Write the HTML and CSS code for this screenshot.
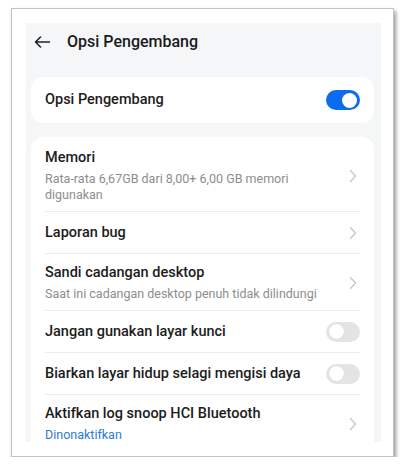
FILE: index.html
```html
<!DOCTYPE html>
<html lang="id">
<head>
<meta charset="utf-8">
<link rel="stylesheet" href="styles.css">
</head>
<body>
<div class="frame">
  <div class="screen">
    <div class="header">
      <svg class="back" width="16" height="12" viewBox="0 0 16 12"><path d="M15.5 6H1.5M6.5 1L1.5 6l5 5" fill="none" stroke="#222" stroke-width="1.6" stroke-linecap="round" stroke-linejoin="round"/></svg>
      <span class="title">Opsi Pengembang</span>
    </div>
    <div class="card card-main">
      <span class="row-title">Opsi Pengembang</span>
      <span class="toggle on"><span class="knob"></span></span>
    </div>
    <div class="card list">
      <div class="row two first">
        <div class="texts">
          <div class="row-title">Memori</div>
          <div class="sub">Rata-rata 6,67GB dari 8,00+ 6,00 GB memori digunakan</div>
        </div>
        <svg class="chev" width="8" height="14" viewBox="0 0 8 14"><path d="M1.5 1.5L6.5 7l-5 5.5" fill="none" stroke="#c4c4c4" stroke-width="1.2" stroke-linecap="round" stroke-linejoin="round"/></svg>
      </div>
      <div class="row">
        <div class="texts"><div class="row-title">Laporan bug</div></div>
        <svg class="chev" width="8" height="14" viewBox="0 0 8 14"><path d="M1.5 1.5L6.5 7l-5 5.5" fill="none" stroke="#c4c4c4" stroke-width="1.2" stroke-linecap="round" stroke-linejoin="round"/></svg>
      </div>
      <div class="row two">
        <div class="texts">
          <div class="row-title">Sandi cadangan desktop</div>
          <div class="sub">Saat ini cadangan desktop penuh tidak dilindungi</div>
        </div>
        <svg class="chev" width="8" height="14" viewBox="0 0 8 14"><path d="M1.5 1.5L6.5 7l-5 5.5" fill="none" stroke="#c4c4c4" stroke-width="1.2" stroke-linecap="round" stroke-linejoin="round"/></svg>
      </div>
      <div class="row">
        <div class="texts"><div class="row-title">Jangan gunakan layar kunci</div></div>
        <span class="toggle"><span class="knob"></span></span>
      </div>
      <div class="row">
        <div class="texts"><div class="row-title">Biarkan layar hidup selagi mengisi daya</div></div>
        <span class="toggle"><span class="knob"></span></span>
      </div>
      <div class="row two last">
        <div class="texts">
          <div class="row-title">Aktifkan log snoop HCI Bluetooth</div>
          <div class="sub blue">Dinonaktifkan</div>
        </div>
        <svg class="chev" width="8" height="14" viewBox="0 0 8 14"><path d="M1.5 1.5L6.5 7l-5 5.5" fill="none" stroke="#c4c4c4" stroke-width="1.2" stroke-linecap="round" stroke-linejoin="round"/></svg>
      </div>
    </div>
  </div>
</div>
</body>
</html>
```
FILE: styles.css
```css
* { box-sizing: border-box; }
html, body { margin: 0; padding: 0; background: #ffffff; }
body {
  font-family: Roboto, "Noto Sans", "Liberation Sans", sans-serif;
  color: #1c1c1c;
}
.frame {
  margin: 8px 0 0 11px;
  width: 383px;
  height: 449px;
  background: #ffffff;
  border: 1px solid #c2c2c2;
  box-shadow: 2px 3px 4px rgba(0,0,0,0.4);
  padding: 14px 12px 13px 14px;
}
.screen {
  height: 419px;
  background: #f5f6f8;
  overflow: hidden;
  padding: 0 7px 0 5px;
}
.header {
  height: 37px;
  display: flex;
  align-items: center;
  padding-left: 3px;
}
.back { margin-top: 1px; }
.title {
  margin-left: 17px;
  font-size: 16px;
  font-weight: 500;
  color: #1a1a1a;
}
.card {
  background: #ffffff;
  border-radius: 12px;
}
.card-main {
  margin-top: 17px;
  height: 46px;
  display: flex;
  align-items: center;
  justify-content: space-between;
  padding: 0 14px;
}
.row-title {
  font-size: 14.5px;
  font-weight: 500;
  line-height: 20px;
  color: #1c1c1c;
}
.toggle {
  width: 34px;
  height: 20px;
  border-radius: 10px;
  background: #e4e4e4;
  display: flex;
  align-items: center;
  padding: 0 3px;
  flex: none;
}
.toggle .knob {
  width: 15px;
  height: 15px;
  border-radius: 50%;
  background: #ffffff;
  box-shadow: 0 0 1px rgba(0,0,0,0.15);
}
.toggle.on {
  background: #0b6cf2;
  justify-content: flex-end;
}
.list {
  margin-top: 14px;
  padding: 0 14px;
}
.row {
  display: flex;
  align-items: center;
  min-height: 42px;
  border-bottom: 1px solid #ececec;
}
.row.two {
  padding: 9px 0 8px;
}
.row.two.first {
  padding: 11px 0 8px;
}
.row.last { border-bottom: none; padding-top: 9px; }
.texts { flex: 1; min-width: 0; padding-right: 18px; }
.sub {
  margin-top: 3px;
  font-size: 12.5px;
  line-height: 16px;
  color: #8d8d8d;
}
.sub.blue { color: #2b7bd6; }
.chev { margin-right: 3px; flex: none; }
```
